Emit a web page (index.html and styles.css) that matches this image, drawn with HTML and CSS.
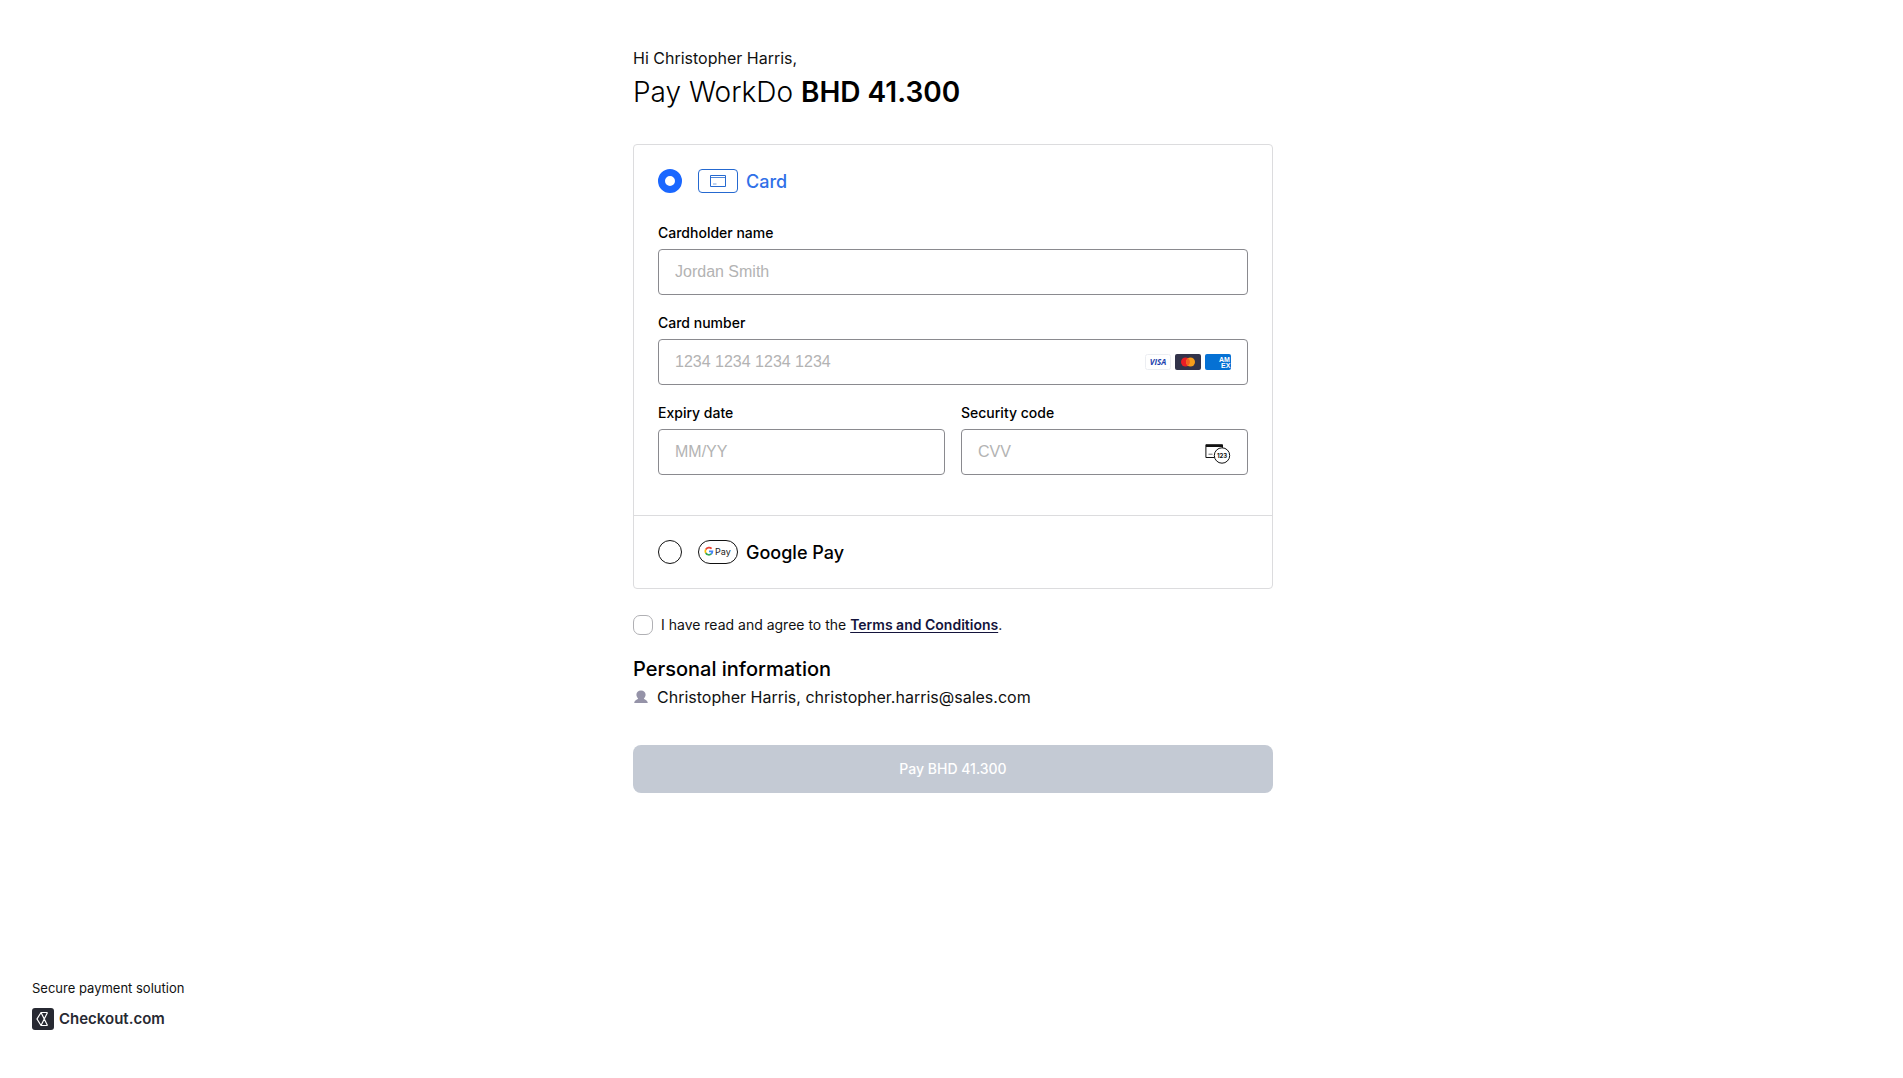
FILE: index.html
```html
<!DOCTYPE html>
<html lang="en">
<head>
<meta charset="utf-8">
<meta name="viewport" content="width=device-width, initial-scale=1">
<title>Pay WorkDo</title>
<link rel="stylesheet" href="styles.css">
</head>
<body>
<main class="checkout">
  <header class="intro">
    <p class="greeting">Hi Christopher Harris,</p>
    <h1 class="title">Pay WorkDo <strong>BHD 41.300</strong></h1>
  </header>
  <form class="form">
    <div class="methods">
      <section class="method">
        <label class="method-head selected">
          <input class="radio" type="radio" name="method" checked>
          <span class="chip">
            <svg width="16" height="12" viewBox="0 0 16 12" fill="none" stroke="#2569d0"><path d="M.5.5h15v11H.5z"/><path d="M1 2.500h14" stroke-opacity=".8"/><path d="M3 9h3.500" stroke-opacity=".6"/></svg>
          </span>
          <span class="method-name">Card</span>
        </label>
        <div class="fields">
          <div class="field wide">
            <label for="holder">Cardholder name</label>
            <div class="box"><input id="holder" type="text" placeholder="Jordan Smith"></div>
          </div>
          <div class="field wide">
            <label for="number">Card number</label>
            <div class="box">
              <input id="number" type="text" placeholder="1234 1234 1234 1234">
              <span class="brands">
                <svg width="26" height="16" viewBox="0 0 26 16"><rect x=".5" y=".5" width="25" height="15" rx="2" fill="#fff" stroke="#eceef2"/><text x="13" y="11" text-anchor="middle" class="visa">VISA</text></svg>
                <svg width="26" height="16" viewBox="0 0 26 16"><rect width="26" height="16" rx="2" fill="#32334a"/><circle cx="10.500" cy="8" r="4.500" fill="#ea1d25"/><circle cx="15.500" cy="8" r="4.500" fill="#f79e1b"/><path d="M13 4.300a4.500 4.500 0 0 1 0 7.400a4.500 4.500 0 0 1 0-7.400z" fill="#f16022"/></svg>
                <svg width="26" height="16" viewBox="0 0 26 16"><rect width="26" height="16" rx="2" fill="#0571d4"/><g class="amex"><text x="14" y="8">AM</text><text x="16" y="14">EX</text></g></svg>
              </span>
            </div>
          </div>
          <div class="field">
            <label for="expiry">Expiry date</label>
            <div class="box"><input id="expiry" type="text" placeholder="MM/YY"></div>
          </div>
          <div class="field">
            <label for="cvv">Security code</label>
            <div class="box">
              <input id="cvv" type="text" placeholder="CVV">
              <svg width="26" height="24" viewBox="0 -4 26 24" fill="none" stroke="#111"><path d="M9.500 13.500H.9V.7h16.600v4"/><path d="M1 2h16.500" stroke-width="2"/><path d="M3.500 10.200h4" stroke-opacity=".6"/><circle cx="17" cy="11.500" r="7.700" fill="#fff"/><text x="17" y="14" text-anchor="middle" class="digits">123</text></svg>
            </div>
          </div>
        </div>
      </section>
      <section class="method">
        <label class="method-head">
          <input class="radio" type="radio" name="method">
          <span class="chip pill">
            <svg width="28" height="12" viewBox="0 0 28 12"><g fill="none" stroke-width="1.700"><path d="M7.600 2.700A3.600 3.600 0 0 0 1.800 3.500" stroke="#ea4335"/><path d="M1.800 3.500a3.600 3.600 0 0 0 0 3.500" stroke="#fbbc04"/><path d="M1.800 7a3.600 3.600 0 0 0 5.500 .9" stroke="#34a853"/><path d="M7.200 8A3.600 3.600 0 0 0 8.400 5.400H5" stroke="#4285f4"/></g><text x="11" y="9" class="gpay">Pay</text></svg>
          </span>
          <span class="method-name">Google Pay</span>
        </label>
      </section>
    </div>
    <div class="terms">
      <input class="check" type="checkbox" id="terms">
      <label for="terms">I have read and agree to the <a href="#">Terms and Conditions</a>.</label>
    </div>
    <h2 class="subtitle">Personal information</h2>
    <p class="person">
      <svg width="16" height="16" viewBox="0 0 16 16" fill="#9593a8"><path d="M8 1.500c2.800 0 4.600 1.800 4.600 4.200 0 1.500-.7 2.900-1.800 3.700.3 1 3.700 1.200 4 4.600H1.200c.3-3.400 3.700-3.600 4-4.600-1.100-.8-1.800-2.200-1.800-3.700 0-2.400 1.800-4.200 4.600-4.200z"/></svg>
      <span>Christopher Harris, christopher.harris@sales.com</span>
    </p>
    <button class="pay" type="button" disabled>Pay BHD 41.300</button>
  </form>
</main>
<footer class="footer">
  <p class="secure">Secure payment solution</p>
  <a class="brand" href="#">
    <svg width="22" height="22" viewBox="0 0 22 22" fill="none"><rect width="22" height="22" rx="3" fill="#272932"/><path d="M15.500 4.500H9L5 11l4 6.500h6.500M9 4.500l6.500 13M9 17.500l6.500-13" stroke="#fff" stroke-width="1.200"/></svg>
    <span>Checkout.com</span>
  </a>
</footer>
</body>
</html>
```
FILE: styles.css
```css
* { box-sizing: border-box; }
body {
  margin: 0;
  min-height: 100vh;
  display: flex;
  flex-direction: column;
  background: #fff;
  color: #111;
  font-family: Inter, "Liberation Sans", sans-serif;
  font-size: 16px;
  line-height: 24px;
}
p, h1, h2 { margin: 0; }
.checkout {
  width: 100%;
  max-width: 643px;
  margin: 0 auto;
  padding: 46px 0 32px 3px;
  flex: 1;
}
.title { font-size: 28px; font-weight: 300; line-height: 44px; color: #000; }
.title strong { font-weight: 600; }
.intro { margin-bottom: 30px; }
.methods { border: 1px solid #dcdcde; border-radius: 4px; }
.method { padding: 24px; }
.method + .method { border-top: 1px solid #dcdcde; }
.method-head { display: flex; align-items: center; height: 24px; }
.radio {
  appearance: none;
  width: 24px;
  height: 24px;
  margin: 0 16px 0 0;
  border: 1px solid #111;
  border-radius: 50%;
}
.radio:checked { border: 7px solid #1a67ff; }
.chip {
  display: flex;
  align-items: center;
  justify-content: center;
  width: 40px;
  height: 24px;
  margin-right: 8px;
  border: 1px solid #111;
  border-radius: 4px;
}
.pill { border-radius: 12px; }
.selected .chip { border-color: #2569d0; }
.method-name { padding-top: 2px; font-size: 18px; font-weight: 500; color: #000; }
.selected .method-name { color: #2f70e8; }
.fields {
  display: grid;
  grid-template-columns: 1fr 1fr;
  gap: 18px 16px;
  padding: 30px 0 16px;
}
.wide { grid-column: span 2; }
.field label { display: block; margin-bottom: 6px; font-size: 14px; line-height: 20px; font-weight: 500; color: #000; }
.box {
  display: flex;
  align-items: center;
  height: 46px;
  padding: 0 16px;
  border: 1px solid #8a8a8f;
  border-radius: 4px;
}
.box input {
  flex: 1;
  min-width: 0;
  padding: 0;
  border: 0;
  outline: 0;
  background: none;
  font: 16px "Liberation Sans", Arial, sans-serif;
}
.box input::placeholder { color: #b3b3b3; }
.brands { display: flex; gap: 4px; }
.visa { font: italic 700 8px "Open Sans", sans-serif; fill: #1c3fae; }
.amex { font: 700 7px "Liberation Sans", sans-serif; fill: #fff; }
.digits { font: 700 6px Inter, sans-serif; fill: #111; stroke: none; }
.gpay { font: 400 9px Inter, sans-serif; fill: #222; }
.terms { display: flex; align-items: center; gap: 8px; margin: 26px 0 22px; height: 20px; font-size: 14px; }
.check { appearance: none; width: 20px; height: 20px; margin: 0; border: 1px solid #b0b0b4; border-radius: 7px; }
.terms a { color: #14143c; font-weight: 600; text-underline-offset: 2px; }
.subtitle { font-size: 20px; line-height: 24px; font-weight: 500; color: #000; }
.person { display: flex; align-items: center; gap: 8px; margin: 4px 0 36px; }
.pay {
  width: 100%;
  height: 48px;
  padding: 0 0 2px;
  border: 0;
  border-radius: 8px;
  background: #c4cad4;
  color: #fff;
  font: 500 14px Inter, sans-serif;
}
.footer { padding: 0 32px 48px; }
.secure { font-size: 13px; line-height: 20px; margin-bottom: 10px; }
.brand { display: flex; align-items: center; gap: 5px; color: #272932; text-decoration: none; font-size: 15px; font-weight: 600; line-height: 22px; }
```
